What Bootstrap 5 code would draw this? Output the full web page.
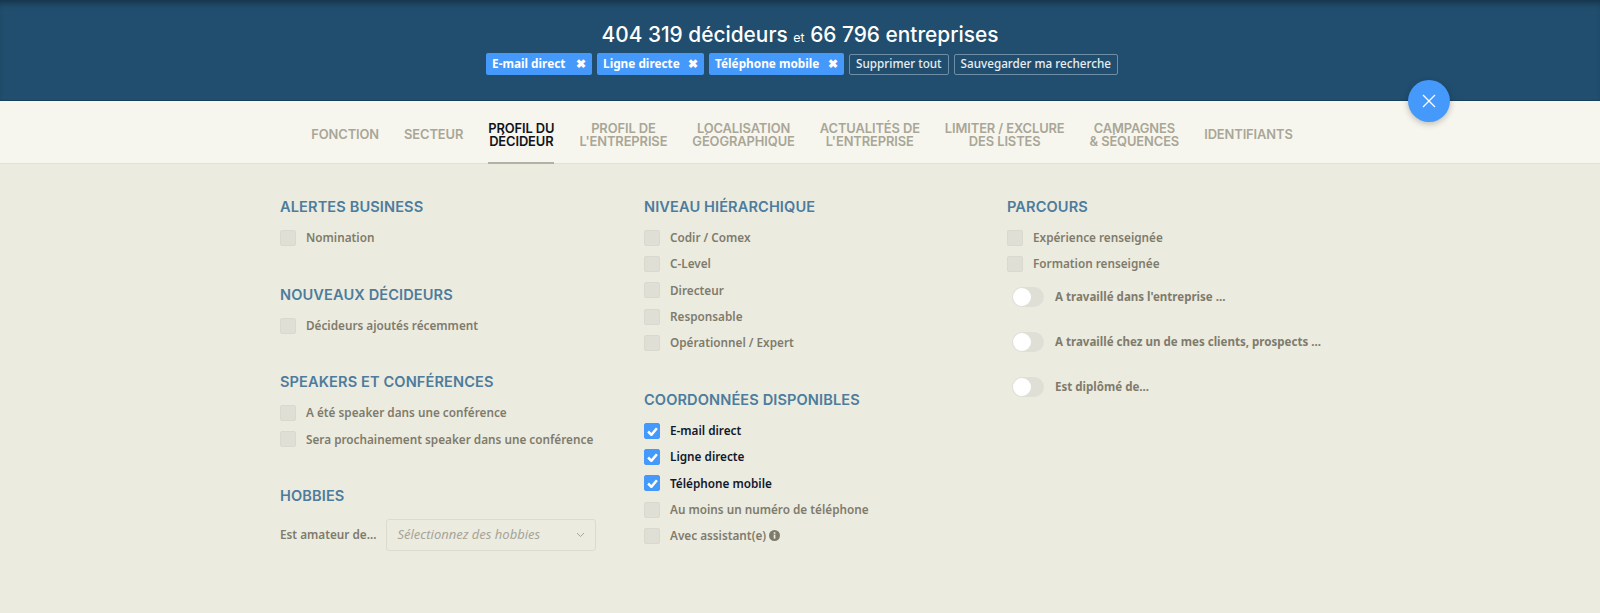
<!DOCTYPE html>
<html lang="fr"><head><meta charset="utf-8"><title>Recherche</title>
<link href="https://cdn.jsdelivr.net/npm/bootstrap@5.3.0/dist/css/bootstrap.min.css" rel="stylesheet">
<style>
html,body{height:613px;overflow:hidden}
body{background:#ecebe0;font-family:"Noto Sans","Open Sans",sans-serif;color:#7f7b6c}
.top-band{height:101px;background:#214e6e;box-shadow:inset 0 6px 6px -3px rgba(0,0,0,.35);padding-top:21px;border-bottom:1px solid #17405f}
.top-title{font-family:Inter,sans-serif;font-size:20.85px;font-weight:500;color:#fff;line-height:28px;text-align:center;margin-bottom:1px}
.top-title small{font-size:12.5px;font-weight:400}
.chip-row{display:flex;justify-content:center;gap:5px;align-items:center;padding-left:4px}
.chip{background:#4599fb;color:#fff;font-size:11.8px;font-weight:700;height:22px;border-radius:2px;padding:0 6px;display:flex;align-items:center;justify-content:space-between;white-space:nowrap}
.chip-a{width:106px}.chip-b{width:107px}.chip-c{width:135px}
.chip b{font-size:12px}
.ghost{border:1px solid #6d8ea6;color:#e8eef2;font-size:11.7px;font-weight:500;height:21px;border-radius:2px;padding:0 6px;display:flex;align-items:center;background:transparent;white-space:nowrap}
.tab-band{height:63px;background:#f7f6ee;border-bottom:1px solid #e2e1d5;display:flex;justify-content:center;gap:25px;position:relative;padding-left:4px}
.tab-item{font-family:Inter,sans-serif;font-size:12.9px;font-weight:600;line-height:13.5px;color:#a9a697;text-align:center;height:63px;padding-top:7px;display:flex;align-items:center;text-transform:uppercase;letter-spacing:-.1px;border-bottom:2px solid transparent}
.tab-item.on{color:#10131c;border-bottom-color:#b3b1a6}
.close-fab{position:absolute;left:1408px;top:-21px;width:42px;height:42px;border-radius:50%;background:#4599fb;box-shadow:0 2px 6px rgba(0,0,0,.25);display:flex;align-items:center;justify-content:center;border:0;padding:0}
.filter-grid{display:grid;grid-template-columns:364px 363px 340px;margin-left:280px;padding-top:34px}
.sect{margin-bottom:35px}
.col-tight .sect{margin-bottom:34.4px}
.sect-title{font-family:Inter,sans-serif;font-size:14.6px;font-weight:600;line-height:18px;color:#4d7c9d;text-transform:uppercase;margin-bottom:9px;letter-spacing:.1px}
.opt{display:flex;align-items:center;height:26.2px;font-size:11.75px;font-weight:600;white-space:nowrap}
.box{width:16px;height:16px;border-radius:2px;background:#dfdfd6;border:1px solid #d9d9cf;margin-right:10px;flex:none;display:flex;align-items:center;justify-content:center}
.box.on{background:#4599fb;border-color:#4599fb}
.opt.on{color:#10182b}
.info{margin-left:3px}
.tog-list{margin-top:-3px}
.tog{display:flex;align-items:center;height:45px;font-size:11.55px;font-weight:700;white-space:nowrap;padding-left:5px}
.tog-track{width:32px;height:20px;border-radius:10px;background:#dfdfd6;margin-right:11px;position:relative;flex:none}
.tog-track::after{content:"";position:absolute;left:1px;top:1px;width:18px;height:18px;border-radius:50%;background:#fff}
.hob{display:flex;align-items:center;font-size:11.75px;font-weight:600;margin-top:14px}
.pick{width:210px;height:32px;border:1px solid #dcdbd0;border-radius:3px;margin-left:10px;padding:0 10px;display:flex;align-items:center;justify-content:space-between;font-style:italic;font-weight:400;color:#a7a599;font-size:13px}
</style></head><body>
<header class="top-band">
<div class="top-title">404 319 décideurs <small>et</small> 66 796 entreprises</div>
<div class="chip-row">
<span class="chip chip-a">E-mail direct<b>✖</b></span>
<span class="chip chip-b">Ligne directe<b>✖</b></span>
<span class="chip chip-c">Téléphone mobile<b>✖</b></span>
<button class="ghost">Supprimer tout</button>
<button class="ghost">Sauvegarder ma recherche</button>
</div>
</header>
<nav class="tab-band">
<button class="close-fab" aria-label="Fermer"><svg width="16" height="16" viewBox="0 0 16 16"><path d="M2 2l12 12M14 2L2 14" stroke="#fff" stroke-width="1.3"/></svg></button>
<div class="tab-item">Fonction</div><div class="tab-item">Secteur</div><div class="tab-item on">Profil du<br>décideur</div><div class="tab-item">Profil de<br>l'entreprise</div><div class="tab-item">Localisation<br>géographique</div><div class="tab-item">Actualités de<br>l'entreprise</div><div class="tab-item">Limiter / exclure<br>des listes</div><div class="tab-item">Campagnes<br>&amp; séquences</div><div class="tab-item">Identifiants</div>
</nav>
<main class="filter-grid">
<div class="col-tight">
<section class="sect"><h3 class="sect-title">Alertes business</h3><div class="opt"><span class="box"></span>Nomination</div></section>
<section class="sect"><h3 class="sect-title">Nouveaux décideurs</h3><div class="opt"><span class="box"></span>Décideurs ajoutés récemment</div></section>
<section class="sect"><h3 class="sect-title">Speakers et conférences</h3><div class="opt"><span class="box"></span>A été speaker dans une conférence</div><div class="opt"><span class="box"></span>Sera prochainement speaker dans une conférence</div></section>
<section class="sect"><h3 class="sect-title">Hobbies</h3><div class="hob">Est amateur de...<div class="pick">Sélectionnez des hobbies<svg width="9" height="6" viewBox="0 0 9 6"><path d="M1 1l3.5 3.5L8 1" fill="none" stroke="#a7a599"/></svg></div></div></section>
</div>
<div>
<section class="sect"><h3 class="sect-title">Niveau hiérarchique</h3><div class="opt"><span class="box"></span>Codir / Comex</div><div class="opt"><span class="box"></span>C-Level</div><div class="opt"><span class="box"></span>Directeur</div><div class="opt"><span class="box"></span>Responsable</div><div class="opt"><span class="box"></span>Opérationnel / Expert</div></section>
<section class="sect"><h3 class="sect-title">Coordonnées disponibles</h3>
<div class="opt on"><span class="box on"><svg width="11" height="9" viewBox="0 0 10 8"><path d="M1 4l3 3 5-6" fill="none" stroke="#fff" stroke-width="2.3"/></svg></span>E-mail direct</div>
<div class="opt on"><span class="box on"><svg width="11" height="9" viewBox="0 0 10 8"><path d="M1 4l3 3 5-6" fill="none" stroke="#fff" stroke-width="2.3"/></svg></span>Ligne directe</div>
<div class="opt on"><span class="box on"><svg width="11" height="9" viewBox="0 0 10 8"><path d="M1 4l3 3 5-6" fill="none" stroke="#fff" stroke-width="2.3"/></svg></span>Téléphone mobile</div>
<div class="opt"><span class="box"></span>Au moins un numéro de téléphone</div>
<div class="opt"><span class="box"></span>Avec assistant(e)<svg class="info" width="11" height="11" viewBox="0 0 11 11"><circle cx="5.5" cy="5.5" r="5.5" fill="#7f7b6c"/><rect x="4.7" y="4.6" width="1.7" height="4" fill="#ecebe0"/><rect x="4.7" y="2.2" width="1.7" height="1.6" fill="#ecebe0"/></svg></div></section>
</div>
<div>
<section><h3 class="sect-title">Parcours</h3><div class="opt"><span class="box"></span>Expérience renseignée</div><div class="opt"><span class="box"></span>Formation renseignée</div>
<div class="tog-list"><div class="tog"><span class="tog-track"></span>A travaillé dans l'entreprise ...</div><div class="tog"><span class="tog-track"></span>A travaillé chez un de mes clients, prospects ...</div><div class="tog"><span class="tog-track"></span>Est diplômé de...</div></div></section>
</div>
</main>
</body></html>
